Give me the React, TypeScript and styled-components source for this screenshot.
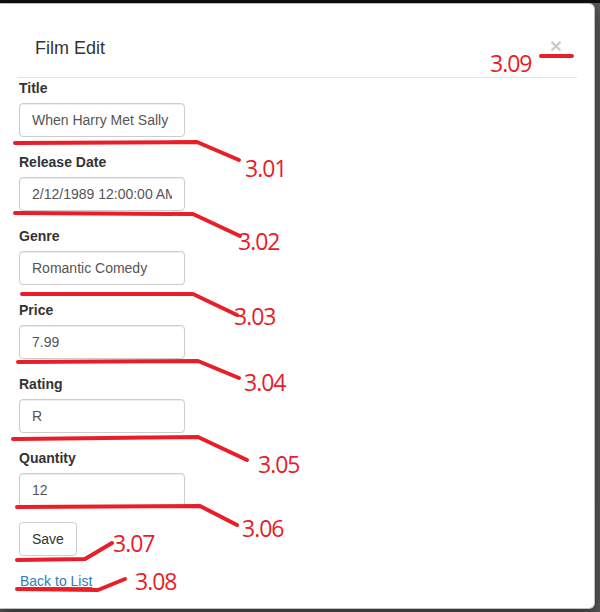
import styled, { createGlobalStyle } from "styled-components";

const GlobalStyle = createGlobalStyle`
  html, body {
    margin: 0;
    padding: 0;
    background: #595959;
    font-family: "Liberation Sans", Arial, sans-serif;
  }
  * { box-sizing: border-box; }
`;

const FIELDS = [
  { label: "Title", value: "When Harry Met Sally" },
  { label: "Release Date", value: "2/12/1989 12:00:00 AM" },
  { label: "Genre", value: "Romantic Comedy" },
  { label: "Price", value: "7.99" },
  { label: "Rating", value: "R" },
  { label: "Quantity", value: "12" },
];

// hand-drawn red markup over the form
const MARKS = [
  { pts: "541,56 572,56", text: "3.09", x: 490, y: 72 },
  { pts: "15,143 197,142 239,160", text: "3.01", x: 245, y: 177 },
  { pts: "15,213 193,214 240,236", text: "3.02", x: 238, y: 250 },
  { pts: "22,294 193,294 237,315", text: "3.03", x: 234, y: 325 },
  { pts: "18,362 198,361 239,378", text: "3.04", x: 244, y: 391 },
  { pts: "13,439 198,437 247,460", text: "3.05", x: 258, y: 473 },
  { pts: "17,507 200,506 237,525", text: "3.06", x: 242, y: 537 },
  { pts: "17,560 85,559 112,543", text: "3.07", x: 113, y: 552 },
  { pts: "17,589 98,590 125,579", text: "3.08", x: 135, y: 590 },
];

const Page = styled.div`
  position: relative;
  width: 600px;
  height: 612px;
  display: flex;
  flex-direction: column;
  overflow: hidden;
`;

const NavStrip = styled.div`
  height: 3px;
  background: #0f0f0f;
`;

const ModalArea = styled.div`
  flex: 1;
  display: flex;
  padding: 0 5px 3px 0;
`;

const Modal = styled.div`
  flex: 1;
  background: #fff;
  border: 1px solid rgba(0, 0, 0, 0.25);
  border-left: none;
  border-radius: 0 6px 6px 0;
  box-shadow: 0 5px 15px rgba(0, 0, 0, 0.5);
  display: flex;
  flex-direction: column;
`;

const Header = styled.div`
  height: 74px;
  margin: 0 17px 0 17px;
  border-bottom: 1px solid #e5e5e5;
  display: flex;
  justify-content: space-between;
  align-items: flex-start;
`;

const Title = styled.h4`
  margin: 34px 0 0 18px;
  font-size: 18px;
  font-weight: 400;
  line-height: 20px;
  color: #333;
`;

const Close = styled.button`
  margin: 31px 15px 0 0;
  padding: 0;
  border: 0;
  background: transparent;
  font-family: "Liberation Sans", Arial, sans-serif;
  font-size: 21px;
  font-weight: 700;
  line-height: 1;
  color: #000;
  opacity: 0.2;
`;

const Body = styled.div`
  padding: 0 19px;
`;

const Group = styled.div`
  margin-bottom: 15px;
`;

const Label = styled.label`
  display: block;
  margin-bottom: 5px;
  font-size: 14px;
  font-weight: 700;
  line-height: 20px;
  color: #333;
`;

const Input = styled.input`
  display: block;
  width: 166px;
  height: 34px;
  padding: 6px 12px;
  font-family: "Liberation Sans", Arial, sans-serif;
  font-size: 14px;
  line-height: 20px;
  color: #555;
  background: #fff;
  border: 1px solid #ccc;
  border-radius: 4px;
  box-shadow: inset 0 1px 1px rgba(0, 0, 0, 0.075);
  outline: none;
`;

const Button = styled.button`
  height: 34px;
  padding: 6px 12px;
  font-family: "Liberation Sans", Arial, sans-serif;
  font-size: 14px;
  line-height: 20px;
  color: #333;
  background: #fff;
  border: 1px solid #ccc;
  border-radius: 4px;
`;

const BackLink = styled.a`
  display: inline-block;
  margin-left: 1px;
  font-size: 14px;
  line-height: 20px;
  color: #337ab7;
  text-decoration: underline;
`;

const Markup = styled.svg`
  position: absolute;
  left: 0;
  top: 0;
  pointer-events: none;
`;

const MarkText = styled.text`
  font-family: "Open Sans", "Noto Sans", sans-serif;
  font-size: 23px;
  letter-spacing: -1px;
  fill: #ea1d26;
`;

export default function App() {
  return (
    <>
      <GlobalStyle />
      <Page>
        <NavStrip />
        <ModalArea>
          <Modal>
            <Header>
              <Title>Film Edit</Title>
              <Close>×</Close>
            </Header>
            <Body>
              {FIELDS.map((f) => (
                <Group key={f.label}>
                  <Label>{f.label}</Label>
                  <Input readOnly value={f.value} />
                </Group>
              ))}
              <Group>
                <Button>Save</Button>
              </Group>
              <BackLink href="#">Back to List</BackLink>
            </Body>
          </Modal>
        </ModalArea>
        <Markup width="600" height="612" viewBox="0 0 600 612">
          {MARKS.map((m) => (
            <g key={m.text}>
              <polyline
                points={m.pts}
                fill="none"
                stroke="#e81f28"
                strokeWidth="4"
                strokeLinecap="round"
                strokeLinejoin="round"
              />
              <MarkText x={m.x} y={m.y}>
                {m.text}
              </MarkText>
            </g>
          ))}
        </Markup>
      </Page>
    </>
  );
}
